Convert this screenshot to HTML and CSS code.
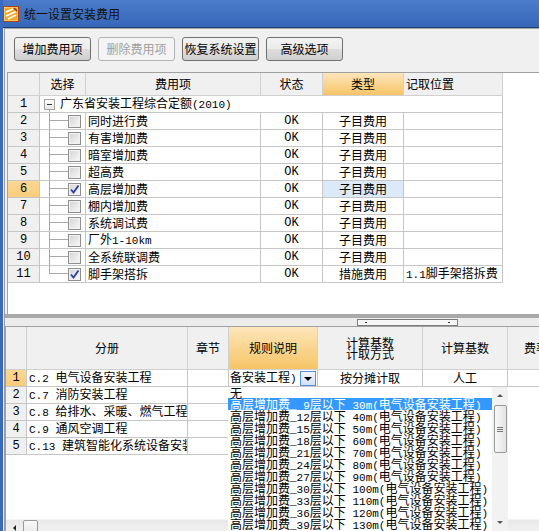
FILE: index.html
```html
<!DOCTYPE html>
<html>
<head>
<meta charset="utf-8">
<title>统一设置安装费用</title>
<link rel="stylesheet" href="styles.css">
</head>
<body>
<div class="window">
  <div class="titlebar">
    <svg class="appicon" width="16" height="16" viewBox="0 0 16 16">
      <rect x="0.5" y="0.5" width="15" height="15" fill="#f5a524" stroke="#b2401a"/>
      <rect x="1.5" y="1.5" width="13" height="13" fill="none" stroke="#ffd36a" stroke-width="0.8"/>
      <path d="M3 6 L10 3 M3 10 L13 5.5 M5 13 L13 9" stroke="#fff" stroke-width="1.7" fill="none"/>
      <path d="M11 2 L14 5" stroke="#8a2a10" stroke-width="1.2"/>
    </svg>
    <span class="title">统一设置安装费用</span>
  </div>
  <div class="main">
    <div class="toolbar">
      <button class="btn">增加费用项</button>
      <button class="btn" disabled>删除费用项</button>
      <button class="btn">恢复系统设置</button>
      <button class="btn">高级选项</button>
    </div>

    <div class="topgrid">
      <div class="trow thead">
        <div class="c rn"></div>
        <div class="c">选择</div>
        <div class="c">费用项</div>
        <div class="c">状态</div>
        <div class="c hl">类型</div>
        <div class="c left">记取位置</div>
      </div>
      <div class="trow">
        <div class="c rn"><span class="n">1</span></div>
        <div class="c root"><span class="minus"></span><span class="roottext">广东省安装工程综合定额<span class="m">(2010)</span></span></div>
      </div>
      <div class="trow">
        <div class="c rn"><span class="n">2</span></div>
        <div class="c sel"><span class="cb"></span></div>
        <div class="c item">同时进行费</div>
        <div class="c"><span class="n">OK</span></div>
        <div class="c">子目费用</div>
        <div class="c left"></div>
      </div>
      <div class="trow">
        <div class="c rn"><span class="n">3</span></div>
        <div class="c sel"><span class="cb"></span></div>
        <div class="c item">有害增加费</div>
        <div class="c"><span class="n">OK</span></div>
        <div class="c">子目费用</div>
        <div class="c left"></div>
      </div>
      <div class="trow">
        <div class="c rn"><span class="n">4</span></div>
        <div class="c sel"><span class="cb"></span></div>
        <div class="c item">暗室增加费</div>
        <div class="c"><span class="n">OK</span></div>
        <div class="c">子目费用</div>
        <div class="c left"></div>
      </div>
      <div class="trow">
        <div class="c rn"><span class="n">5</span></div>
        <div class="c sel"><span class="cb"></span></div>
        <div class="c item">超高费</div>
        <div class="c"><span class="n">OK</span></div>
        <div class="c">子目费用</div>
        <div class="c left"></div>
      </div>
      <div class="trow">
        <div class="c rn rnsel"><span class="n">6</span></div>
        <div class="c sel"><span class="cb on"><svg width="11" height="11" viewBox="0 0 11 11"><path d="M2 5.5 L4.5 8.5 L9.5 1.5" stroke="#2b3fa0" stroke-width="1.8" fill="none"/></svg></span></div>
        <div class="c item">高层增加费</div>
        <div class="c"><span class="n">OK</span></div>
        <div class="c cellsel">子目费用</div>
        <div class="c left"></div>
      </div>
      <div class="trow">
        <div class="c rn"><span class="n">7</span></div>
        <div class="c sel"><span class="cb"></span></div>
        <div class="c item">棚内增加费</div>
        <div class="c"><span class="n">OK</span></div>
        <div class="c">子目费用</div>
        <div class="c left"></div>
      </div>
      <div class="trow">
        <div class="c rn"><span class="n">8</span></div>
        <div class="c sel"><span class="cb"></span></div>
        <div class="c item">系统调试费</div>
        <div class="c"><span class="n">OK</span></div>
        <div class="c">子目费用</div>
        <div class="c left"></div>
      </div>
      <div class="trow">
        <div class="c rn"><span class="n">9</span></div>
        <div class="c sel"><span class="cb"></span></div>
        <div class="c item"><span>厂外<span class="m">1-10km</span></span></div>
        <div class="c"><span class="n">OK</span></div>
        <div class="c">子目费用</div>
        <div class="c left"></div>
      </div>
      <div class="trow">
        <div class="c rn"><span class="n">10</span></div>
        <div class="c sel"><span class="cb"></span></div>
        <div class="c item">全系统联调费</div>
        <div class="c"><span class="n">OK</span></div>
        <div class="c">子目费用</div>
        <div class="c left"></div>
      </div>
      <div class="trow">
        <div class="c rn"><span class="n">11</span></div>
        <div class="c sel last"><span class="cb on"><svg width="11" height="11" viewBox="0 0 11 11"><path d="M2 5.5 L4.5 8.5 L9.5 1.5" stroke="#2b3fa0" stroke-width="1.8" fill="none"/></svg></span></div>
        <div class="c item">脚手架搭拆</div>
        <div class="c"><span class="n">OK</span></div>
        <div class="c">措施费用</div>
        <div class="c left"><span><span class="m">1.1</span>脚手架搭拆费</span></div>
      </div>
    </div>

    <div class="splitter"><div class="handle"></div></div>

    <div class="bottomgrid">
      <div class="brow bhead">
        <div class="c rn"></div>
        <div class="c">分册</div>
        <div class="c">章节</div>
        <div class="c hl">规则说明</div>
        <div class="c"><span class="two">计算基数<br>计取方式</span></div>
        <div class="c">计算基数</div>
        <div class="c left pad">费率</div>
      </div>
      <div class="brow">
        <div class="c rn rnsel"><span class="n">1</span></div>
        <div class="c left"><span><span class="m">C.2 </span>电气设备安装工程</span></div>
        <div class="c"></div>
        <div class="c edit"><span class="etext">备安装工程<span class="m">)</span></span><span class="ddbtn"></span></div>
        <div class="c">按分摊计取</div>
        <div class="c">人工</div>
        <div class="c"></div>
      </div>
      <div class="brow">
        <div class="c rn"><span class="n">2</span></div>
        <div class="c left"><span><span class="m">C.7 </span>消防安装工程</span></div>
        <div class="c"></div>
        <div class="c blank"></div><div class="c blank"></div><div class="c blank"></div><div class="c blank"></div>
      </div>
      <div class="brow">
        <div class="c rn"><span class="n">3</span></div>
        <div class="c left"><span><span class="m">C.8 </span>给排水、采暖、燃气工程</span></div>
        <div class="c"></div>
        <div class="c blank"></div><div class="c blank"></div><div class="c blank"></div><div class="c blank"></div>
      </div>
      <div class="brow">
        <div class="c rn"><span class="n">4</span></div>
        <div class="c left"><span><span class="m">C.9 </span>通风空调工程</span></div>
        <div class="c"></div>
        <div class="c blank"></div><div class="c blank"></div><div class="c blank"></div><div class="c blank"></div>
      </div>
      <div class="brow">
        <div class="c rn"><span class="n">5</span></div>
        <div class="c left"><span><span class="m">C.13 </span>建筑智能化系统设备安装工程</span></div>
        <div class="c"></div>
        <div class="c blank"></div><div class="c blank"></div><div class="c blank"></div><div class="c blank"></div>
      </div>
      <div class="filler"></div>
      <div class="hscroll"><span class="hsleft"></span><span class="hsthumb"></span></div>

      <div class="dropdown">
        <div class="ddlist">
          <div class="dditem first">无</div>
          <div class="dditem on">高层增加费<span class="m">_ 9</span>层以下<span class="m"> 30m(</span>电气设备安装工程<span class="m">)</span></div>
          <div class="dditem">高层增加费<span class="m">_12</span>层以下<span class="m"> 40m(</span>电气设备安装工程<span class="m">)</span></div>
          <div class="dditem">高层增加费<span class="m">_15</span>层以下<span class="m"> 50m(</span>电气设备安装工程<span class="m">)</span></div>
          <div class="dditem">高层增加费<span class="m">_18</span>层以下<span class="m"> 60m(</span>电气设备安装工程<span class="m">)</span></div>
          <div class="dditem">高层增加费<span class="m">_21</span>层以下<span class="m"> 70m(</span>电气设备安装工程<span class="m">)</span></div>
          <div class="dditem">高层增加费<span class="m">_24</span>层以下<span class="m"> 80m(</span>电气设备安装工程<span class="m">)</span></div>
          <div class="dditem">高层增加费<span class="m">_27</span>层以下<span class="m"> 90m(</span>电气设备安装工程<span class="m">)</span></div>
          <div class="dditem">高层增加费<span class="m">_30</span>层以下<span class="m"> 100m(</span>电气设备安装工程<span class="m">)</span></div>
          <div class="dditem">高层增加费<span class="m">_33</span>层以下<span class="m"> 110m(</span>电气设备安装工程<span class="m">)</span></div>
          <div class="dditem">高层增加费<span class="m">_36</span>层以下<span class="m"> 120m(</span>电气设备安装工程<span class="m">)</span></div>
          <div class="dditem">高层增加费<span class="m">_39</span>层以下<span class="m"> 130m(</span>电气设备安装工程<span class="m">)</span></div>
        </div>
        <div class="ddscroll">
          <div class="sbtn"><span class="up"></span></div>
          <div class="thumb"><span class="grip"></span></div>
          <div class="track"></div>
          <div class="sbtn"><span class="down"></span></div>
        </div>
      </div>
    </div>
  </div>
</div>
</body>
</html>
```

FILE: styles.css
```css
* { box-sizing: border-box; margin: 0; padding: 0; }
html, body { width: 539px; height: 531px; overflow: hidden; }
body {
  background: #f0f0f0;
  font-family: "Noto Sans CJK SC", "Noto Sans CJK JP", sans-serif;
  font-size: 12px;
  color: #000;
}
.m { font-family: "Liberation Mono", "DejaVu Sans Mono", monospace; font-size: 11px; }
.n { font-family: "Liberation Mono", "DejaVu Sans Mono", monospace; font-size: 12px; }

.window {
  width: 620px;
  height: 531px;
  border-left: 3px solid #3a6abd;
  background: #f0f0f0;
  display: flex;
  flex-direction: column;
}
.titlebar {
  flex: none;
  height: 28px;
  display: flex;
  align-items: flex-start;
  gap: 5px;
  padding-top: 6px;
  background: linear-gradient(#4b7bca, #3767b9);
  border-bottom: 1px solid #1f4079;
}
.appicon { flex: none; display: block; }
.title { line-height: 16px; color: #111; }

.main {
  flex: 1;
  min-height: 0;
  margin-left: 1px;
  border-left: 1px solid #9c9c9c;
  border-top: 1px solid #a4a4a4;
  display: flex;
  flex-direction: column;
}
.toolbar {
  flex: none;
  height: 43px;
  display: flex;
  gap: 7px;
  padding: 8px 0 0 9px;
}
.btn {
  width: 77px;
  height: 24px;
  font: inherit;
  font-size: 12px;
  color: #000;
  border: 1px solid #707070;
  border-radius: 3px;
  background: linear-gradient(#f3f3f3 0%, #ebebeb 50%, #dddddd 51%, #d0d0d0 100%);
  line-height: 22px;
  text-align: center;
}
.btn:disabled { color: #a0a0a0; border-color: #b0b4b7; background: #f4f4f4; }

.topgrid {
  flex: none;
  height: 242px;
  margin-left: 2px;
  border-top: 1px solid #a0a0a0;
  border-left: 1px solid #a0a0a0;
  background: #fff;
}
.trow {
  display: grid;
  grid-template-columns: 32px 46px 175px 62px 81px 99px;
  width: 495px;
  height: 17px;
}
.thead { height: 23px; }
.c {
  border-right: 1px solid #c6c6c6;
  border-bottom: 1px solid #c6c6c6;
  display: flex;
  align-items: center;
  justify-content: center;
  white-space: nowrap;
  overflow: hidden;
  line-height: 16px;
}
.thead .c, .bhead .c { background: #f0f0f0; border-color: #d0d0d0; }
.c.hl, .thead .c.hl, .bhead .c.hl {
  background: linear-gradient(#fde6bb, #f6c466);
}
.c.left { justify-content: flex-start; padding-left: 2px; }
.c.left.pad { padding-left: 16px; }
.c.rn { background: #f0f0f0; }
.c.rnsel { background: linear-gradient(#fcd894, #f9cc7c); }
.c.cellsel { background: #dce9f8; }
.c.item { justify-content: flex-start; padding-left: 2px; }

.c.root {
  grid-column: 2 / span 5;
  justify-content: flex-start;
  padding-left: 4px;
  background: linear-gradient(#a8a8a8, #a8a8a8) 9px 100% / 1px 3px no-repeat;
}
.minus {
  width: 11px;
  height: 11px;
  border: 1px solid #a4a4a4;
  background: linear-gradient(#fff, #e6e6e6);
  flex: none;
  margin-right: 5px;
  display: flex;
  align-items: center;
  justify-content: center;
}
.minus::after { content: ""; width: 5px; height: 1px; background: #333; }
.roottext { display: inline-block; }

.c.sel {
  justify-content: flex-start;
  padding-left: 28px;
  background:
    linear-gradient(#a8a8a8, #a8a8a8) 9px 0 / 1px 100% no-repeat,
    linear-gradient(#a8a8a8, #a8a8a8) 9px 7px / 19px 1px no-repeat;
}
.c.sel.last {
  background:
    linear-gradient(#a8a8a8, #a8a8a8) 9px 0 / 1px 8px no-repeat,
    linear-gradient(#a8a8a8, #a8a8a8) 9px 7px / 19px 1px no-repeat;
}
.cb {
  width: 13px;
  height: 13px;
  flex: none;
  border: 1px solid #8e8f8f;
  background: linear-gradient(135deg, #d3d3d3, #f9f9f9);
  box-shadow: inset 0 0 0 1px #f2f2f2;
  display: flex;
  align-items: center;
  justify-content: center;
}
.cb svg { display: block; }

.splitter {
  flex: none;
  height: 12px;
  border-top: 4px solid #a9a9a9;
  background: #ececec;
  padding: 1px 0 0 352px;
}
.handle {
  width: 101px;
  height: 7px;
  border: 1px solid #7d7d7d;
  background:
    linear-gradient(#333, #333) 7px 2px / 2px 1px no-repeat,
    linear-gradient(#333, #333) 90px 2px / 2px 1px no-repeat,
    #f6f6f6;
}

.bottomgrid {
  flex: 1;
  min-height: 0;
  position: relative;
  overflow: hidden;
  border-top: 1px solid #a0a0a0;
  border-left: 1px solid #a0a0a0;
  background: #fff;
  display: flex;
  flex-direction: column;
}
.brow {
  flex: none;
  display: grid;
  grid-template-columns: 21px 161px 41px 89px 105px 85px 58px;
  height: 17px;
}
.bhead { height: 43px; }
.two { display: block; text-align: center; line-height: 11px; }
.c.blank { border: none; }
.c.edit { justify-content: flex-start; padding-left: 1px; }
.etext { flex: 1; overflow: hidden; white-space: nowrap; }
.ddbtn {
  flex: none;
  width: 16px;
  height: 15px;
  margin-right: 1px;
  border: 1px solid #5b8ed6;
  background: linear-gradient(#f4f8fd, #cfe0f5);
  display: flex;
  align-items: center;
  justify-content: center;
}
.ddbtn::after {
  content: "";
  border-left: 4px solid transparent;
  border-right: 4px solid transparent;
  border-top: 4px solid #000;
  margin-top: 1px;
}
.filler { flex: none; height: 64px; }
.hscroll {
  flex: none;
  height: 17px;
  display: flex;
  align-items: flex-start;
  background: linear-gradient(#e8e8e8, #f4f4f4);
  border-top: 1px solid #f4f4f4;
}
.hsleft {
  width: 16px;
  height: 16px;
  display: flex;
  align-items: center;
  justify-content: center;
}
.hsleft::after {
  content: "";
  border-top: 3px solid transparent;
  border-bottom: 3px solid transparent;
  border-right: 3px solid #222;
}
.hsthumb {
  width: 15px;
  height: 16px;
  margin-left: 1px;
  border: 1px solid #9a9a9a;
  border-radius: 2px;
  background: linear-gradient(#fafafa, #e4e4e4);
}

.dropdown {
  position: absolute;
  left: 222px;
  top: 60px;
  width: 280px;
  height: 144px;
  background: #fff;
  display: flex;
  overflow: hidden;
}
.ddlist { width: 264px; flex: none; }
.dditem {
  height: 12px;
  line-height: 12px;
  white-space: nowrap;
  padding-left: 2px;
}
.dditem.first { height: 11px; line-height: 11px; }
.dditem.on { background: #3399ff; color: #fff; }
.ddscroll {
  width: 16px;
  flex: none;
  background: #f2f2f2;
  display: flex;
  flex-direction: column;
  align-items: center;
}
.sbtn {
  flex: none;
  width: 16px;
  height: 17px;
  display: flex;
  align-items: center;
  justify-content: center;
}
.up, .down { width: 0; height: 0; border-left: 3px solid transparent; border-right: 3px solid transparent; }
.up { border-bottom: 3px solid #555; }
.down { border-top: 3px solid #555; }
.thumb {
  flex: none;
  width: 13px;
  height: 48px;
  margin-top: 1px;
  border: 1px solid #999;
  border-radius: 2px;
  background: linear-gradient(90deg, #f8f8f8, #e2e2e2);
  display: flex;
  align-items: center;
  justify-content: center;
}
.grip {
  width: 6px;
  height: 5px;
  border-top: 1px solid #777;
  border-bottom: 1px solid #777;
  background: linear-gradient(#777, #777) 0 1px / 6px 1px no-repeat;
}
.track { flex: 1; }
```
